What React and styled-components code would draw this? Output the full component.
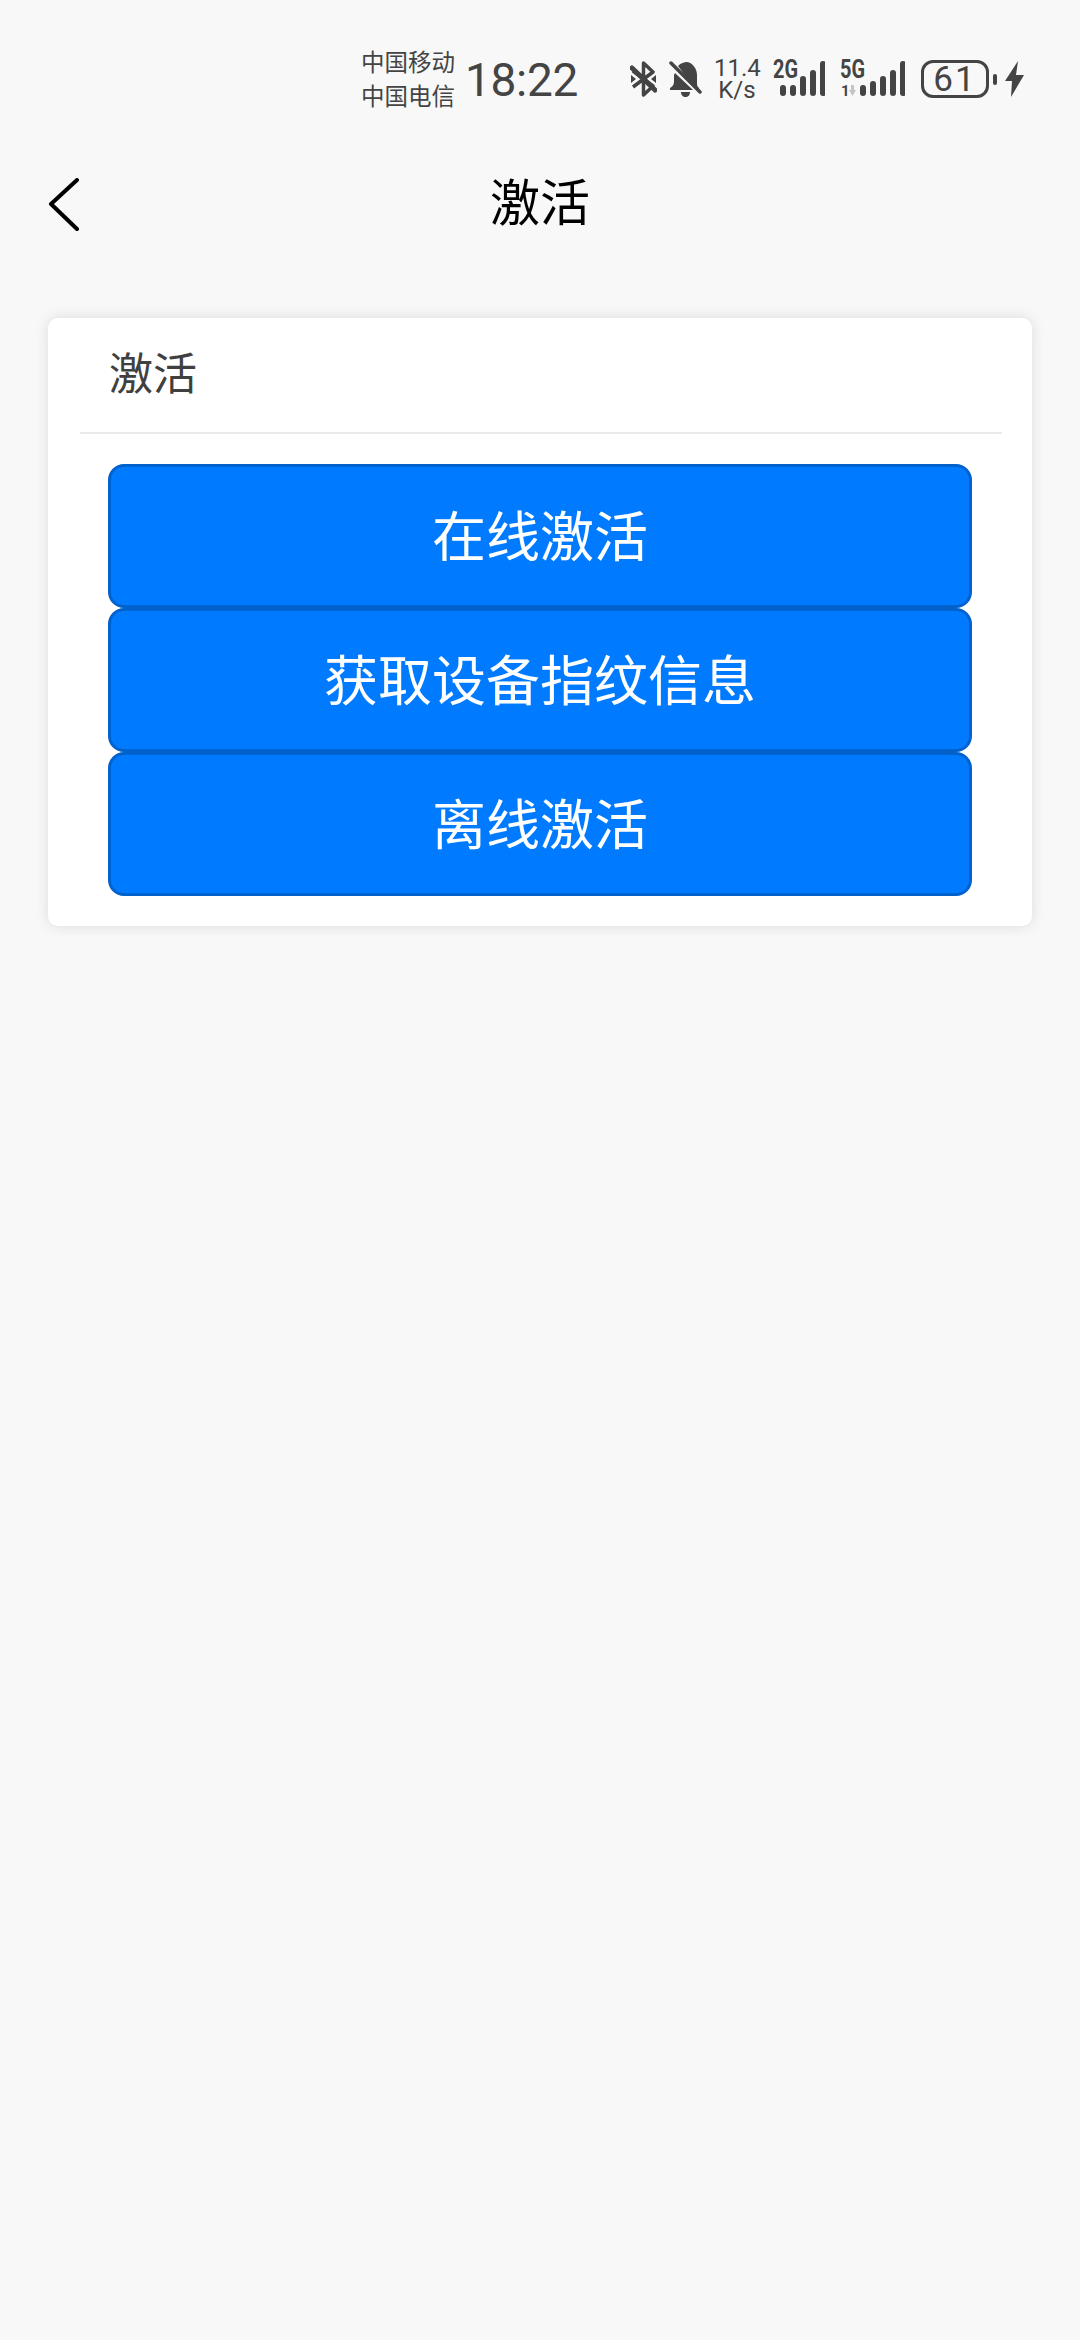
import React from "react"
import styled, { createGlobalStyle } from "styled-components"

const GlobalStyle = createGlobalStyle`
  html, body {
    margin: 0;
    padding: 0;
    background: #f8f8f8;
  }
  * {
    box-sizing: border-box;
  }
`
const Page = styled.div`
  width: 1080px;
  min-height: 2340px;
  background: #f8f8f8;
  font-family: "Noto Sans CJK SC", "Noto Sans", sans-serif;
`
const StatusBar = styled.div`
  height: 158px;
  padding-right: 56px;
  display: flex;
  justify-content: flex-end;
  align-items: center;
  color: #444;
`
const Carrier = styled.div`
  width: 95px;
  font-size: 23.5px;
  line-height: 34px;
  white-space: nowrap;
  margin: 0 9px 3px 0;
`
const Clock = styled.div`
  width: 111px;
  font-family: Roboto, sans-serif;
  font-size: 46px;
  letter-spacing: -0.3px;
  line-height: 50px;
  margin: 1px 54px 0 0;
`
const Speed = styled.div`
  width: 46px;
  margin: 0 13px 0 11px;
  font-family: Roboto, sans-serif;
  font-size: 24px;
  line-height: 22px;
  text-align: center;
  white-space: nowrap;
`
const Glyph = styled.svg`
  display: block;
  flex: none;
  margin-right: ${(p) => p.$gap || 0}px;
`
const Battery = styled.div`
  width: 68px;
  height: 38px;
  border: 3px solid #444;
  border-radius: 12px;
  display: flex;
  align-items: center;
  justify-content: center;
  font-family: Roboto, sans-serif;
  font-size: 35px;
  letter-spacing: 2px;
  line-height: 1;
  flex: none;
`
const Nub = styled.div`
  width: 4px;
  height: 11px;
  border-radius: 2px;
  background: #444;
  margin: 0 8px 0 4px;
`
const NavBar = styled.header`
  position: relative;
  height: 88px;
  display: flex;
  align-items: center;
  justify-content: center;
`
const BackIcon = styled.svg`
  position: absolute;
  left: 45px;
  top: 20px;
`
const Title = styled.h1`
  margin: 0 0 6px;
  font-size: 50px;
  font-weight: 400;
  color: #000;
  line-height: 60px;
`
const Card = styled.section`
  width: 984px;
  margin: 72px 0 0 48px;
  padding-bottom: 30px;
  background: #fff;
  border-radius: 10px;
  box-shadow: 0 0 14px rgba(0, 0, 0, 0.12);
`
const CardHeader = styled.div`
  height: 116px;
  margin: 0 30px 0 32px;
  padding: 0 0 8px 29px;
  display: flex;
  align-items: center;
  border-bottom: 2px solid #e9e9e9;
  font-size: 44px;
  color: #404040;
`
const Actions = styled.div`
  margin: 30px 60px 0;
  display: flex;
  flex-direction: column;
`
const Button = styled.button`
  height: 144px;
  padding: 0 0 5px;
  border: 3px solid #0062cc;
  border-radius: 16px;
  background: #007bff;
  color: #fff;
  font-family: inherit;
  font-size: 54px;
  line-height: 1;
  cursor: pointer;
`

function Signal({ label, bars, x, width, gap, lte }) {
  return (
    <Glyph width={width} height="46" viewBox={`0 -5 ${width} 46`} $gap={gap}>
      <text x="0" y="17" fontFamily="Roboto, sans-serif" fontWeight="700" fontSize="25" fill="#444" textLength="25" lengthAdjust="spacingAndGlyphs">
        {label}
      </text>
      {lte && (
        <>
          <text x="1" y="35" fontFamily="Roboto, sans-serif" fontWeight="700" fontSize="15" fill="#444">1</text>
          <path d="M11 24v5H9l3.500 6 3.500-6h-2v-5z" fill="#c4c4c4" />
        </>
      )}
      {bars.map((h, i) => (
        <rect key={i} x={x + i * 10} y={35 - h} width="6" height={h} rx="3" fill="#444" />
      ))}
    </Glyph>
  )
}

export default function App() {
  return (
    <>
      <GlobalStyle />
      <Page>
        <StatusBar>
          <Carrier>
            中国移动
            <br />
            中国电信
          </Carrier>
          <Clock>18:22</Clock>
          <Glyph width="27" height="36" viewBox="0 0 27 36" $gap={12}>
            <path d="M3 10l20 15-9.500 9V2l9.500 9L3 26" fill="none" stroke="#444" strokeWidth="3.5" strokeLinejoin="round" />
            <path d="M2 7l23 22" stroke="#444" strokeWidth="5" strokeLinecap="round" />
            <path d="M1 14l5 4-5 4zM26 14l-5 4 5 4z" fill="#444" />
          </Glyph>
          <Glyph width="33" height="36" viewBox="0 0 33 36" $gap={1}>
            <path d="M9 5c3-3 6-4 9-4 6 1 10 7 10 13v9c0 2 1 3 2 4v2H27z" fill="#444" />
            <path d="M6 12l18 17H1v-2c2-1 4-3 4-6v-7z" fill="#444" />
            <path d="M12 31h9c0 3-2 5-4.500 5S12 34 12 31z" fill="#444" />
            <path d="M4 2l28 28" stroke="#f8f8f8" strokeWidth="3" transform="translate(-1 2)" />
            <path d="M2 2l29 29" stroke="#444" strokeWidth="3.5" strokeLinecap="round" />
          </Glyph>
          <Speed>
            11.4
            <br />
            K/s
          </Speed>
          <Signal label="2G" bars={[11, 11, 20, 26, 35]} x={7} width={52} gap={15} />
          <Signal label="5G" bars={[11, 15, 20, 26, 35]} x={20} width={65} gap={16} lte />
          <Battery>61</Battery>
          <Nub />
          <Glyph width="19" height="36" viewBox="0 0 19 36">
            <path d="M13 0L0 20h7L6 36 19 14h-8z" fill="#444" />
          </Glyph>
        </StatusBar>
        <NavBar>
          <BackIcon width="36" height="54" viewBox="0 0 36 54" fill="none">
            <path d="M32 2L6 26l26 25" stroke="#000" strokeWidth="4" strokeLinecap="round" strokeLinejoin="round" />
          </BackIcon>
          <Title>激活</Title>
        </NavBar>
        <Card>
          <CardHeader>激活</CardHeader>
          <Actions>
            <Button>在线激活</Button>
            <Button>获取设备指纹信息</Button>
            <Button>离线激活</Button>
          </Actions>
        </Card>
      </Page>
    </>
  )
}
